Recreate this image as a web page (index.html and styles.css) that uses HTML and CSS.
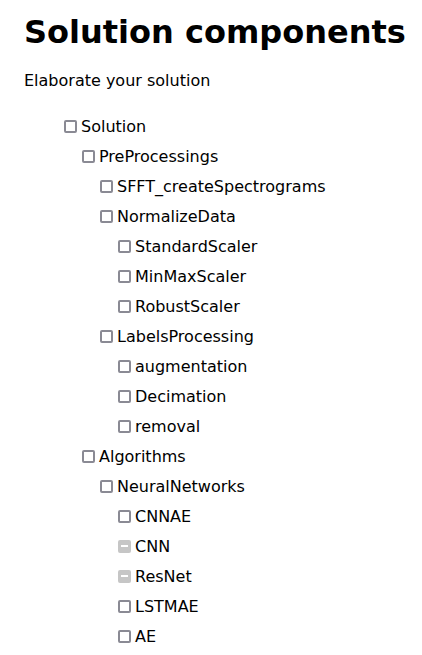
FILE: index.html
```html
<!DOCTYPE html>
<html>
<head>
<meta charset="utf-8">
<link rel="stylesheet" href="styles.css">
</head>
<body>
<div class="page">
  <h1 class="title">Solution components</h1>
  <p class="lead">Elaborate your solution</p>
  <ul class="tree">
    <li><div class="row"><span class="box"></span><span>Solution</span></div>
      <ul class="tree sub">
        <li><div class="row"><span class="box"></span><span>PreProcessings</span></div>
          <ul class="tree sub">
            <li><div class="row"><span class="box"></span><span>SFFT_createSpectrograms</span></div></li>
            <li><div class="row"><span class="box"></span><span>NormalizeData</span></div>
              <ul class="tree sub">
                <li><div class="row"><span class="box"></span><span>StandardScaler</span></div></li>
                <li><div class="row"><span class="box"></span><span>MinMaxScaler</span></div></li>
                <li><div class="row"><span class="box"></span><span>RobustScaler</span></div></li>
              </ul>
            </li>
            <li><div class="row"><span class="box"></span><span>LabelsProcessing</span></div>
              <ul class="tree sub">
                <li><div class="row"><span class="box"></span><span>augmentation</span></div></li>
                <li><div class="row"><span class="box"></span><span>Decimation</span></div></li>
                <li><div class="row"><span class="box"></span><span>removal</span></div></li>
              </ul>
            </li>
          </ul>
        </li>
        <li><div class="row"><span class="box"></span><span>Algorithms</span></div>
          <ul class="tree sub">
            <li><div class="row"><span class="box"></span><span>NeuralNetworks</span></div>
              <ul class="tree sub">
                <li><div class="row"><span class="box"></span><span>CNNAE</span></div></li>
                <li><div class="row"><span class="box partial"></span><span>CNN</span></div></li>
                <li><div class="row"><span class="box partial"></span><span>ResNet</span></div></li>
                <li><div class="row"><span class="box"></span><span>LSTMAE</span></div></li>
                <li><div class="row"><span class="box"></span><span>AE</span></div></li>
              </ul>
            </li>
          </ul>
        </li>
      </ul>
    </li>
  </ul>
</div>
</body>
</html>
```
FILE: styles.css
```css
html, body {
  margin: 0;
  padding: 0;
  background: #fff;
}
body {
  font-family: "DejaVu Sans", sans-serif;
  color: #000;
}
.page {
  padding: 13px 0 0 24px;
}
.title {
  margin: 0;
  font-size: 32px;
  font-weight: bold;
  white-space: nowrap;
}
.lead {
  margin: 20px 0 0 0;
  font-size: 16px;
}
.tree {
  list-style: none;
  margin: 0;
  padding: 0 0 0 40px;
}
.page > .tree {
  margin-top: 21px;
}
.tree.sub {
  padding-left: 18px;
}
.row {
  display: flex;
  align-items: center;
  height: 30px;
  font-size: 16px;
}
.box {
  box-sizing: border-box;
  flex: none;
  width: 13px;
  height: 13px;
  margin-right: 4px;
  border: 2px solid #8a8a94;
  border-radius: 2px;
  background: #fff;
  position: relative;
}
.box.partial {
  background: #c6c6c6;
  border-color: #c6c6c6;
}
.box.partial::after {
  content: "";
  position: absolute;
  left: 1px;
  right: 1px;
  top: 3px;
  height: 2px;
  background: #fff;
}
```
